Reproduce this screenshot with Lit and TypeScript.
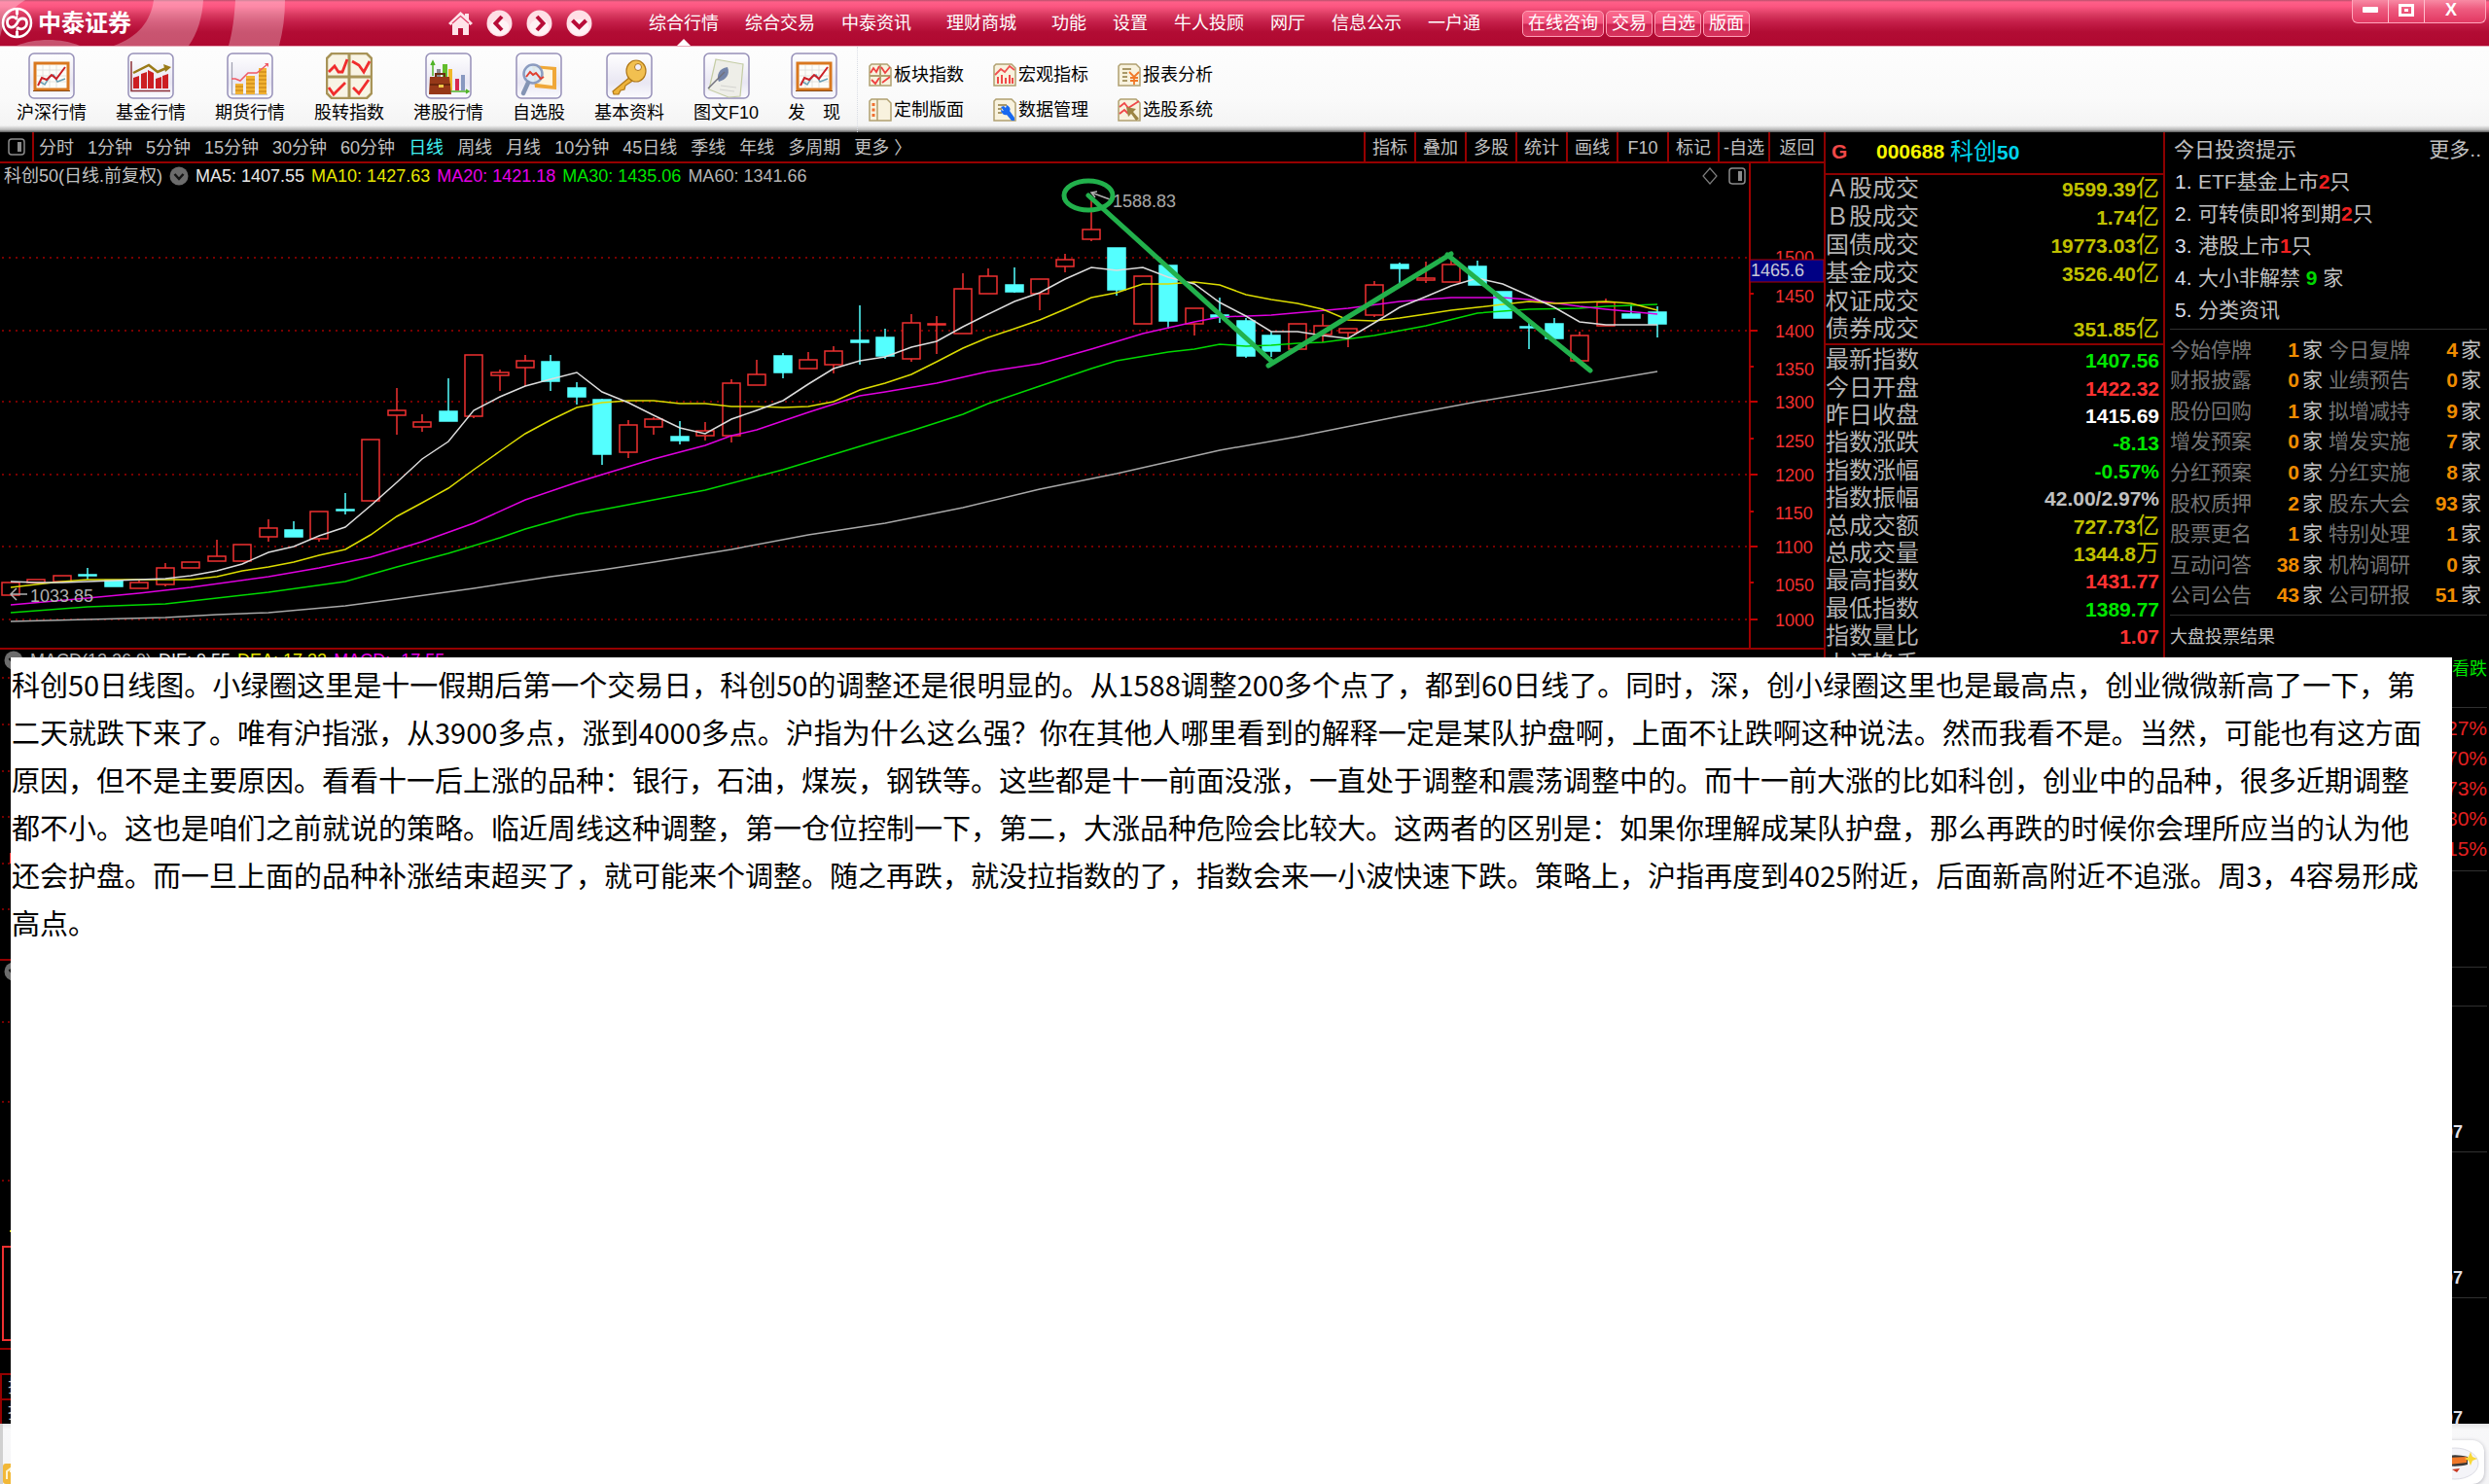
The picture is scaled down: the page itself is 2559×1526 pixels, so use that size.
import { LitElement, html, css, svg, nothing } from "lit";
import { customElement } from "lit/decorators.js";

type Pt = [number, number];
type Candle = [string, number, number, number, number];

/* ---------- navigation data ---------- */

const MENU = ["综合行情", "综合交易", "中泰资讯", "理财商城", "功能", "设置", "牛人投顾", "网厅", "信息公示", "一户通"];
const QUICK = ["在线咨询", "交易", "自选", "版面"];
const PERIODS = ["分时", "1分钟", "5分钟", "15分钟", "30分钟", "60分钟", "日线", "周线", "月线", "10分钟", "45日线", "季线", "年线", "多周期", "更多 〉"];
const CHART_TABS = ["指标", "叠加", "多股", "统计", "画线", "F10", "标记", "-自选", "返回"];

const AVERAGES = [
  ["MA5: 1407.55", "white"],
  ["MA10: 1427.63", "yellow"],
  ["MA20: 1421.18", "magenta"],
  ["MA30: 1435.06", "lime"],
  ["MA60: 1341.66", "grey"],
];

/* ---------- quote data ---------- */

const TURNOVER = [
  ["Ａ股成交", "9599.39", "亿"],
  ["Ｂ股成交", "1.74", "亿"],
  ["国债成交", "19773.03", "亿"],
  ["基金成交", "3526.40", "亿"],
  ["权证成交", "", ""],
  ["债券成交", "351.85", "亿"],
].map((r) => [...r, "gold"]);

const INDEX_ROWS = [
  ["最新指数", "1407.56", "", "up"],
  ["今日开盘", "1422.32", "", "down"],
  ["昨日收盘", "1415.69", "", "plain"],
  ["指数涨跌", "-8.13", "", "up"],
  ["指数涨幅", "-0.57%", "", "up"],
  ["指数振幅", "42.00/2.97%", "", "dim"],
  ["总成交额", "727.73", "亿", "gold"],
  ["总成交量", "1344.8", "万", "gold"],
  ["最高指数", "1431.77", "", "down"],
  ["最低指数", "1389.77", "", "up"],
  ["指数量比", "1.07", "", "down"],
  ["上证换手", "", "", "dim"],
];

const COUNTS = [
  ["今始停牌", "1", "今日复牌", "4"],
  ["财报披露", "0", "业绩预告", "0"],
  ["股份回购", "1", "拟增减持", "9"],
  ["增发预案", "0", "增发实施", "7"],
  ["分红预案", "0", "分红实施", "8"],
  ["股权质押", "2", "股东大会", "93"],
  ["股票更名", "1", "特别处理", "1"],
  ["互动问答", "38", "机构调研", "0"],
  ["公司公告", "43", "公司研报", "51"],
];

const NOTE = [
  "科创50日线图。小绿圈这里是十一假期后第一个交易日，科创50的调整还是很明显的。从1588调整200多个点了，都到60日线了。同时，深，创小绿圈这里也是最高点，创业微微新高了一下，第",
  "二天就跌下来了。唯有沪指涨，从3900多点，涨到4000多点。沪指为什么这么强？你在其他人哪里看到的解释一定是某队护盘啊，上面不让跌啊这种说法。然而我看不是。当然，可能也有这方面",
  "原因，但不是主要原因。看看十一后上涨的品种：银行，石油，煤炭，钢铁等。这些都是十一前面没涨，一直处于调整和震荡调整中的。而十一前大涨的比如科创，创业中的品种，很多近期调整",
  "都不小。这也是咱们之前就说的策略。临近周线这种调整，第一仓位控制一下，第二，大涨品种危险会比较大。这两者的区别是：如果你理解成某队护盘，那么再跌的时候你会理所应当的认为他",
  "还会护盘。而一旦上面的品种补涨结束超买了，就可能来个调整。随之再跌，就没拉指数的了，指数会来一小波快速下跌。策略上，沪指再度到4025附近，后面新高附近不追涨。周3，4容易形成",
  "高点。",
].join("");

/* ---------- chart data: kind, high, body top, body bottom, low ---------- */

const CANDLES: Candle[] = [
  ["r", 599, 599, 612, 612], ["r", 596, 596, 599, 599], ["r", 592, 592, 598, 598], ["c", 584, 591, 592, 596],
  ["c", 597, 597, 603, 603], ["r", 597, 599, 605, 605], ["r", 579, 584, 601, 603], ["r", 578, 578, 584, 584],
  ["r", 555, 572, 577, 577], ["r", 560, 560, 577, 577], ["r", 534, 543, 552, 557], ["c", 536, 545, 552, 552],
  ["r", 526, 526, 554, 557], ["c", 507, 524, 525, 529], ["r", 452, 452, 515, 515], ["r", 399, 422, 427, 447],
  ["r", 426, 434, 439, 444], ["c", 389, 423, 433, 433], ["r", 365, 365, 428, 430], ["r", 380, 383, 386, 402],
  ["r", 365, 371, 378, 397], ["c", 365, 372, 392, 402], ["c", 393, 399, 408, 416], ["c", 410, 411, 467, 478],
  ["r", 432, 437, 465, 471], ["r", 429, 431, 439, 447], ["c", 433, 449, 453, 457], ["r", 434, 443, 448, 453],
  ["r", 390, 394, 448, 455], ["r", 370, 385, 396, 396], ["c", 363, 366, 383, 389], ["r", 362, 370, 379, 379],
  ["r", 356, 361, 375, 384], ["c", 314, 350, 352, 375], ["c", 338, 347, 366, 369], ["r", 323, 332, 369, 372],
  ["r", 325, 333, 334, 364], ["r", 281, 297, 343, 343], ["r", 276, 284, 302, 302], ["c", 275, 293, 300, 301],
  ["r", 287, 287, 302, 319], ["r", 261, 267, 274, 280], ["r", 205, 236, 246, 248], ["c", 255, 255, 298, 304],
  ["r", 284, 284, 333, 333], ["c", 273, 273, 330, 338], ["r", 317, 317, 333, 345], ["c", 306, 324, 326, 332],
  ["c", 327, 330, 366, 368], ["c", 341, 345, 361, 367], ["r", 333, 333, 359, 359], ["r", 323, 335, 344, 352],
  ["r", 338, 338, 342, 357], ["r", 289, 293, 324, 326], ["c", 270, 272, 276, 292], ["r", 269, 286, 288, 291],
  ["r", 267, 272, 290, 290], ["c", 268, 274, 293, 293], ["c", 300, 300, 327, 327], ["c", 331, 336, 337, 359],
  ["c", 327, 333, 348, 348], ["r", 341, 345, 371, 371], ["r", 307, 311, 335, 335], ["c", 313, 323, 327, 327],
  ["c", 315, 321, 333, 347],
];

const MA5 = [598, 599, 599, 598, 597, 596, 595, 592, 587, 580, 568, 562, 551, 542, 520, 496, 472, 454, 422, 408, 397, 390, 383,
  403, 414, 427, 440, 446, 431, 422, 412, 395, 379, 371, 367, 357, 351, 336, 323, 310, 301, 287, 275, 278, 275, 285, 292, 311,
  325, 341, 341, 345, 348, 332, 316, 305, 294, 286, 292, 304, 316, 331, 334, 334, 334];
const MA10 = [604, 601, 598, 596, 596, 596, 596, 596, 593, 587, 583, 578, 571, 565, 550, 531, 517, 502, 483, 464, 446, 432, 419,
  414, 412, 412, 415, 415, 418, 418, 419, 418, 413, 401, 394, 385, 372, 358, 347, 338, 329, 318, 306, 301, 292, 292, 290, 293,
  303, 308, 312, 318, 329, 330, 327, 323, 319, 316, 313, 310, 312, 311, 310, 312, 319];
const MA20: Pt[] = [[0, 622], [3, 615], [5, 610], [7, 604], [10, 593], [12, 584], [14, 573], [16, 557], [18, 538], [20, 514],
  [22, 496], [23, 488], [25, 472], [27, 458], [28, 448], [29, 442], [31, 424], [33, 407], [34, 403], [36, 394], [38, 382],
  [40, 374], [42, 359], [44, 343], [46, 331], [47, 326], [49, 324], [52, 317], [54, 310], [56, 306], [58, 306], [59, 308],
  [61, 315], [62, 318], [64, 323]];
const MA30: Pt[] = [[0, 630], [3, 624], [6, 621], [8, 615], [10, 609], [13, 598], [15, 583], [17, 569], [19, 553], [20, 544],
  [22, 529], [24, 519], [25, 514], [27, 504], [30, 483], [33, 459], [35, 443], [37, 426], [38, 415], [40, 397], [42, 379],
  [43, 371], [45, 362], [46, 359], [47, 354], [48, 356], [49, 355], [50, 353], [51, 352], [53, 345], [55, 335], [57, 322],
  [59, 318], [61, 317], [62, 315], [64, 313]];
const MA60: Pt[] = [[0, 639], [3, 637], [6, 635], [8, 632], [10, 630], [13, 623], [15, 616], [18, 605], [21, 593], [23, 586],
  [25, 578], [28, 565], [31, 550], [34, 538], [37, 522], [40, 503], [43, 487], [45, 475], [47, 463], [50, 449], [54, 428],
  [57, 413], [60, 400], [64, 382]];

const cx = (i: number) => Math.round(11 + i * 26.45);
const line = (pts: Pt[]) => pts.map(([i, y]) => `${cx(i)},${y}`).join(" ");
const dense = (ys: number[]) => line(ys.map((y, i) => [i, y] as Pt));

const GRID = [265, 340, 413, 488, 562, 637];
const SCALE: [string, number, number][] = [
  ["1500", 264, 0], ["1450", 304, 302], ["1400", 340, 340], ["1350", 379, 377], ["1300", 413, 413], ["1250", 453, 451],
  ["1200", 488, 488], ["1150", 527, 526], ["1100", 562, 562], ["1050", 601, 599], ["1000", 637, 637],
];

/* ---------- icons ---------- */

const frame = svg`<rect x="1" y="1" width="46" height="46" rx="5" fill="url(#tile)" stroke="#9690b8" stroke-width="1.5"/>`;
const defs = svg`<defs><linearGradient id="tile" x1="0" y1="0" x2="0" y2="1"><stop offset="0" stop-color="#fff"/><stop offset=".65" stop-color="#e9e7f3"/><stop offset="1" stop-color="#fbfbfe"/></linearGradient></defs>`;

const iconLine = svg`${frame}
  <rect x="7" y="11" width="34" height="27" fill="#fdfdf8" stroke="#d9781f" stroke-width="3"/>
  <path d="M5 39.500H43" stroke="#8a4a14"/>
  <path d="M9 18H39M9 24H39M9 30H39M15 13V36M22 13V36M29 13V36" stroke="#dcdcd8" stroke-width=".8"/>
  <path d="M12 30L17 33L22 25L26 23L30 30L38 27" fill="none" stroke="#6aa0b4" stroke-width="1.500"/>
  <path d="M10 34L14 26L19 28L24 23L29 27L38 15" fill="none" stroke="#cc2026" stroke-width="2"/>`;
const iconBars = svg`${frame}
  <path d="M4 9V39.500H44" fill="none" stroke="#8c3038" stroke-width="1.500"/>
  <path d="M6 26l6-2V37H6zM14 22l6-2V37H14zM21 18l6 3V37H21zM29 27l6-2V37H29zM36 24l6-2V37H36z" fill="#cc1e22"/>
  <path d="M6 21L22 13L31 20L40 16" fill="none" stroke="#9a7a18" stroke-width="2.500"/><path d="M37 12L45 15L39 20z" fill="#9a7a18"/>`;
const iconCoins = svg`${frame}
  <path d="M5.500 10V43H42" fill="none" stroke="#a0a0b0" stroke-width="1.200"/>
  <path d="M9 32H17V43H9zM20 24H29V43H20zM33 16H41V43H33z" fill="#f2b233"/>
  <path d="M9 35H17M9 39H17M20 28H29M20 32H29M20 36H29M20 40H29M33 20H41M33 24H41M33 28H41M33 32H41M33 36H41M33 40H41" stroke="#c07c10"/>
  <path d="M5 27H9L14 29L22 21L31 21L36 17L42 12" fill="none" stroke="#ef5a66" stroke-width="1.500"/><path d="M39 11h4v4z" fill="#ef5a66"/>`;
const fourCells = svg`<path d="M6 1H42L47 6V42L42 47H6L1 42V6z" fill="#f8f4e4" stroke="#a89458" stroke-width="2.500"/>
  <path d="M24 1V47M1 25H47" stroke="#a89458" stroke-width="3"/>
  <path d="M3 20L9 14L13 20L17 20L22 7M27 9L34 13L39 20L45 9M3 36L8 43L15 36L20 31M28 36L34 42L44 28" fill="none" stroke="#f02c2c" stroke-width="2.800"/>`;
const iconCase = svg`${frame}
  <path d="M8 24V12M6 13L8 9L10 13M24 40H43M42 38L45 40L42 42" stroke="#50b428" stroke-width="1.500" fill="#50b428"/>
  <rect x="12" y="17" width="4" height="9" fill="#8a8a90"/><rect x="18" y="12" width="5" height="14" fill="#62bc2c"/><rect x="24" y="17" width="4" height="22" fill="#f0b828"/>
  <rect x="31" y="27" width="4" height="12" fill="#d82850"/><rect x="37" y="23" width="4" height="16" fill="#8898c0"/>
  <path d="M11 26V22H20V26" fill="none" stroke="#6c2c10" stroke-width="2"/>
  <path d="M5 25H25L27 43H4z" fill="#963818"/><path d="M5 33H26" stroke="#5c2008" stroke-width="1.500"/><rect x="14" y="33" width="5" height="3" fill="#f0c848"/>`;
const iconSearch = svg`${frame}
  <path d="M17 13L42 15V38L20 36z" fill="#f0a838"/><path d="M20 16L38 18V34L22 32z" fill="#fff6e0"/>
  <circle cx="18" cy="22" r="9.500" fill="#dcecfa" fill-opacity=".9" stroke="#8c9cc0" stroke-width="2.500"/>
  <path d="M11 25L15 20L18 23L21 21L26 27L29 25" fill="none" stroke="#e04030" stroke-width="2"/>
  <path d="M13 31L8 42" stroke="#8494b4" stroke-width="4.500" stroke-linecap="round"/>`;
const iconKey = svg`${frame}
  <path d="M25 25L7 40L8 43H13L15 39L19 38L20 34L29 28z" fill="#eeb43c" stroke="#b07818" stroke-width="1.200"/>
  <ellipse cx="31" cy="19" rx="10" ry="11" fill="#f2c050" stroke="#b07818" stroke-width="1.200"/><circle cx="33" cy="15" r="3.500" fill="#f4f0fa" stroke="#b07818"/>`;
const iconQuill = svg`${frame}
  <path d="M13 7L41 12L38 45L26 46L6 38z" fill="#eeeee8" stroke="#c4ccA4" stroke-width="1.200"/>
  <path d="M18 34L34 36M17 38L32 40" stroke="#d4d4d0"/>
  <path d="M25 15C16 16 13 24 16 30C23 28 28 23 25 15z" fill="#7484a8"/><path d="M22 20L5 37" stroke="#70707c" stroke-width="1.500"/>`;

const TOOLS = [
  ["沪深行情", iconLine], ["基金行情", iconBars], ["期货行情", iconCoins], ["股转指数", fourCells], ["港股行情", iconCase],
  ["自选股", iconSearch], ["基本资料", iconKey], ["图文F10", iconQuill], ["发　现", iconLine],
] as const;

const sheet = svg`<path d="M3 1H19L23 5V23H1V3z" fill="#f8f2de" stroke="#b0a070" stroke-width="1.500"/>`;
const SMALL_TOOLS = [
  ["板块指数", svg`${sheet}<path d="M12 1V23M1 13H23" stroke="#b0a070" stroke-width="2"/><path d="M2 10L5 5L8 9L11 3M13 4L17 10L22 4M3 17L7 21L11 15M14 20L22 14" fill="none" stroke="#f04040" stroke-width="1.800"/>`],
  ["宏观指标", svg`${sheet}<path d="M2 12L8 6L12 9L17 3L22 7" fill="none" stroke="#f05050" stroke-width="1.800"/><path d="M5 21V14M9 21V12M13 21V15M17 21V12M20 21V15" stroke="#f04848" stroke-width="2"/>`],
  ["报表分析", svg`${sheet}<path d="M5 6H14M5 10H10M5 14H10M5 18H10" stroke="#a89868" stroke-width="1.800"/><path d="M12 9L17 14L22 9M17 14V22M13 15H21M13 18H21" fill="none" stroke="#f07828" stroke-width="1.800"/>`],
  ["定制版面", svg`${sheet}<path d="M9 1V23" stroke="#b0a070" stroke-width="1.500"/><path d="M5 5V8M5 10.500V13.500M5 16V19" stroke="#f07030" stroke-width="3"/>`],
  ["数据管理", svg`${sheet}<path d="M5 7H14M5 11H9M5 15H9" stroke="#a89868" stroke-width="1.800"/><path d="M8 9L11 8L13 10L14 7C18 9 18 12 17 13L22 20V23H19L14 17C11 18 8 15 8 12L11 13z" fill="#1868f0"/>`],
  ["选股系统", svg`${sheet}<path d="M2 9L7 5L11 10L22 3M2 16L7 12L11 16" fill="none" stroke="#f04848" stroke-width="1.800"/><path d="M9 9L19 11L16 14L22 21L19 23L14 16L11 19z" fill="#9c8444"/>`],
] as const;

@customElement("app-root")
export class AppRoot extends LitElement {
  static styles = css`
    :host { display: block; font-family: "Liberation Sans", "Noto Sans CJK SC", sans-serif; font-size: 18px; line-height: 24px; color: #c0c0c0; }
    * { box-sizing: border-box; }
    button { font: inherit; color: inherit; background: none; border: 0; padding: 0; margin: 0; white-space: nowrap; }
    a { color: inherit; text-decoration: none; white-space: nowrap; }
    table { border-collapse: collapse; width: 100%; }
    td, th { padding: 0; font-weight: 400; text-align: left; white-space: nowrap; }
    h2, p, ol { margin: 0; padding: 0; font-weight: 400; }
    svg { display: block; flex: none; }
    .app { position: relative; min-height: 100vh; background: #000; display: grid; grid-template-rows: 48px 88px 1fr 63px; overflow: hidden; }

    .top { position: relative; display: flex; color: #fff; border-bottom: 1px solid #e7a9b7;
      background: linear-gradient(#b8506c 0, #ff5f88 2px, #fb5580 7px, #d83a60 15px, #c41e48 23px, #b20c34 33px, #b00830 100%); }
    .brand { flex: none; width: 461px; height: 47px; display: flex; }
    .brand svg { width: 300px; height: 47px; }
    .brand .word { font-size: 24px; font-weight: 700; }
    .shell-nav { display: flex; align-items: center; gap: 14px; width: 206px; }
    .menu { display: flex; align-items: center; gap: 27px; height: 47px; }
    .menu a { position: relative; line-height: 45px; padding-top: 2px; }
    .menu a.wide { margin: 0 9px; }
    .menu a.current::after { content: ""; position: absolute; left: 50%; bottom: 0; margin-left: -7px; border: 7px solid transparent; border-top: 0; border-bottom-color: #fff; }
    .quick { display: flex; gap: 2px; align-items: center; margin-left: 43px; padding-top: 2px; }
    .quick button { height: 27px; line-height: 25px; padding: 0 5px; border: 1px solid #ff9fb6; border-radius: 5px; background: linear-gradient(#fb6a8e 0, #f0507a 48%, #cc2450 52%, #d8345e 100%); }
    .window { margin-left: auto; margin-right: 3px; display: flex; height: 24px; border: 1px solid #ffa6bb; border-top: 0; border-radius: 0 0 6px 6px; background: linear-gradient(#f88aa4, #ee5c80 40%, #e23862); }
    .window button { width: 37px; border-right: 1px solid #ffc0ce; display: grid; place-items: center; padding-bottom: 3px; }
    .window button:last-child { width: 62px; border: 0; padding-right: 8px; font-weight: 700; line-height: 18px; }

    .tools { display: flex; color: #000; background: linear-gradient(#fdfdfd, #fafafa 60%, #f4f4f4 92%, #b8b8b8 97%, #555); }
    .big { display: flex; gap: 30px; padding: 6px 0 0 17px; width: 882px; border-right: 1px dotted #d8dce4; align-items: flex-start; }
    .big button { display: flex; flex-direction: column; align-items: center; gap: 2px; }
    .small { display: grid; grid-template-columns: auto auto auto; gap: 12px 30px; align-content: start; padding: 17px 0 0 11px; }
    .small button { display: flex; gap: 2px; align-items: center; height: 24px; }

    .work { display: grid; grid-template-columns: 1fr 351px 333px; min-height: 0; }
    .chart { display: flex; flex-direction: column; min-width: 0; }
    .bar { display: flex; height: 32px; border-bottom: 2px solid #960000; }
    .bar .dock { width: 35px; border-right: 2px solid #960000; display: grid; place-items: center; }
    .periods { display: flex; padding: 2px 0 0 5px; gap: 14px; flex: 1; align-items: center; }
    .periods .on { color: #40f0f0; }
    .tabs { display: grid; grid-template-columns: repeat(8, 52px) 57px; }
    .tabs button { border-left: 2px solid #960000; text-align: center; padding-top: 2px; }
    .plot { display: grid; grid-template-columns: 1fr 76px; }
    .legend { display: flex; gap: 7px; align-items: center; height: 26px; padding: 0 4px; white-space: nowrap; }
    .legend .tail { margin-left: auto; display: flex; gap: 10px; }
    .plot svg.full { width: 100%; height: auto; overflow: visible; }
    .plot svg text { font-size: 18px; }
    .white { color: #e8e8e8; } .yellow { color: #e6e600; } .magenta { color: #e600e6; } .lime { color: #00e600; } .grey { color: #b4b4b4; }
    .pane { border-top: 2px solid #960000; }
    .pane .legend { height: 22px; }
    .macd { height: 320px; } .third { height: 400px; }
    .rows { height: 78px; padding-top: 24px; border-top: 2px solid #960000; }
    .rows div { border: 2px solid #960000; border-bottom: 0; height: 26px; padding-left: 6px; }

    .quote { border-left: 2px solid #8c0000; border-right: 2px solid #8c0000; }
    .ident { height: 44px; display: flex; align-items: center; font-size: 21px; font-weight: 700; padding: 0 0 2px 6px; border-bottom: 2px solid #8c0000; }
    .ident .flag { width: 46px; color: #f04848; }
    .ident .code { color: #f6f600; margin-right: 6px; }
    .ident .name { color: #00d4ec; }
    .ident .name span { font-size: 24px; font-weight: 400; }
    .quote table { font-size: 24px; line-height: 24px; }
    .quote .sums { height: 175px; border-bottom: 2px solid #8c0000; }
    .quote .marks { height: 341px; margin-top: 1px; }
    .quote th { color: #b4b4b4; }
    .quote td { text-align: right; padding-right: 4px; }
    .quote b { font-size: 21px; line-height: 20px; }
    .gold { color: #c0c000; } .up { color: #00e600; } .down { color: #ff3232; } .plain { color: #fff; } .dim { color: #c0c0c0; }

    .info { font-size: 21px; line-height: 33px; padding: 1px 2px 0 5px; }
    .info header { display: flex; justify-content: space-between; padding: 0 6px 0 4px; }
    .info h2 { font-size: 21px; }
    .info ol { list-style: none; padding: 0 0 3px 5px; border-bottom: 1px solid #303030; }
    .info li { display: flex; white-space: pre; }
    .info li .no { width: 24px; color: #d8dce8; }
    .info .hot { color: #f02020; } .info .calm { color: #00d800; }
    .info table { height: 284px; margin: 5px 0 4px; line-height: 30px; }
    .info th { color: #747474; width: 84px; }
    .info td { text-align: right; color: #c0c0c0; }
    .info td b { color: #f08c00; margin-right: 3px; }
    .info td:nth-child(2) { width: 73px; } .info td:nth-child(4) { padding-right: 6px; }
    .info th:nth-child(3) { padding-left: 6px; width: 90px; }
    .vote { border-top: 1px solid #303030; border-bottom: 1px solid #303030; height: 96px; padding-top: 6px; }
    .vote h2 { font-size: 18px; }
    .vote p { font-size: 18px; text-align: right; color: #00e600; }
    .share { height: 168px; padding-top: 5px; display: grid; align-content: start; border-bottom: 1px solid #303030; text-align: right; color: #e62020; }
    .share span { line-height: 31px; }
    .slot { border-bottom: 1px solid #303030; height: 150px; display: flex; justify-content: flex-end; align-items: flex-end; padding-right: 25px; font-size: 18px; color: #e0e0e8; }
    .slot.tall { height: 99px; } .slot.short { height: 40px; } .slot.last { height: 129px; overflow: hidden; border: 0; }
    .slot b { line-height: 40px; }
    .slot.last b { line-height: 12px; }

    .dock-bar { background: linear-gradient(#e4e4e6, #f8f8f9 6px, #f4f4f6); border-left: 3px solid #d0d0d0; display: flex; justify-content: space-between; align-items: flex-end; }
    .folder { display: block; }
    .robot { width: 60px; height: 45px; margin: 0 5px 1px 0; border-radius: 12px; background: #fff; box-shadow: 0 1px 4px #b0b0b8; }

    .note { position: absolute; left: 11px; right: 38px; top: 676px; bottom: 0; background: #fff; color: #000; padding: 3px 26px 0 1px;
      font-family: "Noto Sans CJK SC", sans-serif; font-size: 29px; line-height: 49px; }
  `;

  private brand() {
    return html`<svg viewBox="0 0 300 47" role="img" aria-label="中泰证券">
      <g fill="#fff" fill-opacity=".3">
        <path d="M158 0H209C208 18 203 34 194 47H117C142 38 155 22 158 0z"/>
        <path d="M242 0H293C293 16 291 32 287 47H235C239 33 241 17 242 0z"/>
        <path d="M0 0H26C12 8 4 20 0 38z"/>
        <path d="M17 47C36 39 63 39 82 47z"/>
      </g>
      <g fill="none" stroke="#fff">
        <circle cx="17.500" cy="23.500" r="14.500" stroke-width="2.500"/>
        <path d="M17.500 9V15M17.500 32V38" stroke-width="3"/>
        <path d="M17.500 20C14 15 7 18 7.500 23.500C8 29 14 30 17.500 24C20 17 27 18 27.500 23C28 29 21 32 17.500 28" stroke-width="2.800"/>
        <path d="M17.500 15V20M17.500 28V32" stroke-width="1.500"/>
      </g>
      <text class="word" x="39" y="32" fill="#fff">中泰证券</text>
    </svg>`;
  }

  private round(d: string, label: string) {
    return html`<button aria-label=${label}><svg width="27" height="28" viewBox="0 0 27 28">
      <ellipse cx="13.500" cy="14" rx="13" ry="13.500" fill="#ffdfe6"/><ellipse cx="13.500" cy="18" rx="10" ry="8" fill="#fff" fill-opacity=".6"/>
      <path d=${d} fill="none" stroke="#b80c38" stroke-width="4"/></svg></button>`;
  }

  private chevron() {
    return html`<svg width="20" height="20" viewBox="0 0 20 20"><circle cx="10" cy="10" r="9.500" fill="#6c6c6c"/><path d="M5.500 8L10 13L14.500 8" fill="none" stroke="#141414" stroke-width="2.500"/></svg>`;
  }

  private panelIcon() {
    return html`<svg width="18" height="18" viewBox="0 0 18 18"><rect x="1" y="1" width="16" height="16" rx="3" fill="none" stroke="#8c8c8c" stroke-width="1.500"/><rect x="10" y="4" width="4" height="10" fill="#8c8c8c"/></svg>`;
  }

  private quoteRows(rows: string[][]) {
    return rows.map(([label, value, unit, tone]) => html`<tr><th scope="row">${label}</th><td class=${tone}><b>${value}</b>${unit}</td></tr>`);
  }

  private candle([kind, hi, top, bottom, lo]: Candle, i: number) {
    const x = cx(i);
    const color = kind === "r" ? "#f03030" : "#54ffff";
    const h = Math.max(bottom - top, 1);
    return svg`<path d="M${x} ${hi}V${top}M${x} ${bottom}V${lo}" stroke=${color} stroke-width="1.500"/>
      <rect x=${x - 9} y=${top} width="18" height=${h} fill=${kind === "r" ? "#000" : color} stroke=${color} stroke-width="1.500"/>`;
  }

  private plot() {
    return html`<svg class="full" viewBox="0 194 1799 472" role="img" aria-label="科创50 日线">
      ${GRID.map((y) => svg`<path d="M2 ${y}H1799" stroke="#a00000" stroke-width="1.500" stroke-dasharray="2 5"/>`)}
      ${CANDLES.map((c, i) => this.candle(c, i))}
      <g fill="none" stroke-width="1.500">
        <polyline points=${line(MA60)} stroke="#a8a8a8"/>
        <polyline points=${line(MA30)} stroke="#00d800"/>
        <polyline points=${line(MA20)} stroke="#e000e0"/>
        <polyline points=${dense(MA10)} stroke="#dcdc00"/>
        <polyline points=${dense(MA5)} stroke="#dcdcdc"/>
        <path d="M28 611H11M17 605L11 611L17 617M1141 205L1122 198M1128 197L1122 198L1126 203" stroke="#b0b0b0"/>
      </g>
      <text x="31" y="619" fill="#b0b0b0">1033.85</text>
      <text x="1144" y="213" fill="#a8a8a8">1588.83</text>
      <g fill="none" stroke="#22b14c" stroke-width="5" stroke-linecap="round">
        <ellipse cx="1119" cy="201" rx="25" ry="15"/>
        <path d="M1119 201L1309 373M1304 376L1492 261M1488 262L1635 381"/>
      </g>
    </svg>`;
  }

  private scale() {
    return html`<svg class="full" viewBox="1799 168 76 498" role="img" aria-label="指数坐标">
      <path d="M1799 168V666" stroke="#a00000" stroke-width="2"/>
      ${SCALE.map(([t, y, tick], i) => svg`${tick ? svg`<path d="M1799 ${tick}h${i % 2 ? 4 : 8}" stroke="#c00000" stroke-width="2"/>` : nothing}
        <text x="1825" y=${y + 7} fill="#f03030">${t}</text>`)}
      <rect x="1799" y="267" width="76" height="23" fill="#000084" stroke="#b00000"/>
      <text x="1800" y="284" fill="#c8c8d8">1465.6</text>
    </svg>`;
  }

  render() {
    return html`<div class="app">
      <header class="top">
        <div class="brand">${this.brand()}</div>
        <div class="shell-nav">
          <button aria-label="首页"><svg width="25" height="26" viewBox="0 0 25 26"><path d="M12.500 1L0 13L2.500 15L4 13.500V25H10V18H15V25H21V13.500L22.500 15L25 13L21 9V3H17V5z" fill="#ffe4ea"/><path d="M4 13L12.500 5.500L21 13" fill="none" stroke="#e0406a" stroke-width="1.200"/></svg></button>
          ${this.round("M16 7L9.500 14L16 21", "后退")}${this.round("M11 7L17.500 14L11 21", "前进")}${this.round("M6.500 11L13.500 18L20.500 11", "展开")}
        </div>
        <nav class="menu">${MENU.map((m, i) => html`<a href="#" class="${i === 0 ? "current" : ""} ${i === 3 ? "wide" : ""}">${m}</a>`)}</nav>
        <div class="quick">${QUICK.map((q) => html`<button>${q}</button>`)}</div>
        <div class="window">
          <button aria-label="最小化"><svg width="16" height="6" viewBox="0 0 16 6"><rect width="16" height="6" rx="1" fill="#fff"/></svg></button>
          <button aria-label="最大化"><svg width="16" height="13" viewBox="0 0 16 13"><rect x="1.500" y="1.500" width="13" height="10" fill="none" stroke="#fff" stroke-width="3"/><rect x="6" y="5" width="4" height="3" fill="#fff"/></svg></button>
          <button aria-label="关闭">X</button>
        </div>
      </header>

      <div class="tools">
        <div class="big">${TOOLS.map(([t, icon]) => html`<button><svg width="48" height="48" viewBox="0 0 48 48">${defs}${icon}</svg><span>${t}</span></button>`)}</div>
        <div class="small">${SMALL_TOOLS.map(([t, icon]) => html`<button><svg width="24" height="24" viewBox="0 0 24 24">${icon}</svg><span>${t}</span></button>`)}</div>
      </div>

      <main class="work">
        <section class="chart">
          <div class="bar">
            <button class="dock" aria-label="侧栏">${this.panelIcon()}</button>
            <div class="periods">${PERIODS.map((p) => html`<button class=${p === "日线" ? "on" : ""}>${p}</button>`)}</div>
            <div class="tabs">${CHART_TABS.map((t) => html`<button>${t}</button>`)}</div>
          </div>
          <div class="plot">
            <div>
              <div class="legend">
                <span>科创50(日线.前复权)</span>${this.chevron()}
                ${AVERAGES.map(([t, c]) => html`<span class=${c}>${t}</span>`)}
                <span class="tail"><svg width="18" height="18" viewBox="0 0 18 18"><path d="M9 1L16 9L9 17L2 9z" fill="none" stroke="#7c7c7c" stroke-width="1.200"/></svg>${this.panelIcon()}</span>
              </div>
              ${this.plot()}
            </div>
            ${this.scale()}
          </div>
          <div class="pane macd">
            <div class="legend">${this.chevron()}<span class="grey">MACD(12,26,9)</span><span class="white">DIF: 9.55</span><span class="yellow">DEA: 17.32</span><span class="magenta">MACD: -17.55</span></div>
            <svg width="12" height="260" viewBox="0 690 12 260"><path d="M2 697H12M2 745H12M2 793H12M2 840H12M2 888H12M2 935H12" stroke="#a00000" stroke-width="1.500" stroke-dasharray="2 4"/><path d="M11 877V888" stroke="#f03030" stroke-width="2"/></svg>
          </div>
          <div class="pane third">
            <div class="legend">${this.chevron()}</div>
            <svg width="12" height="370" viewBox="0 1010 12 370"><path d="M2 1051H12M2 1133H12M2 1214H12" stroke="#a00000" stroke-width="1.500" stroke-dasharray="2 4"/><path d="M10 1266h2" stroke="#c8c800" stroke-width="2"/><path d="M12 1282H3V1378H12" fill="none" stroke="#f03030" stroke-width="2"/></svg>
          </div>
          <div class="rows"><div>扩展</div><div>指标</div></div>
        </section>

        <section class="quote">
          <div class="ident"><span class="flag">G</span><span class="code">000688</span><span class="name"><span>科创</span>50</span></div>
          <table class="sums">${this.quoteRows(TURNOVER)}</table>
          <table class="marks">${this.quoteRows(INDEX_ROWS)}</table>
        </section>

        <aside class="info">
          <header><h2>今日投资提示</h2><a href="#">更多..</a></header>
          <ol>
            <li><span class="no">1.</span>ETF基金上市<b class="hot">2</b>只</li>
            <li><span class="no">2.</span>可转债即将到期<b class="hot">2</b>只</li>
            <li><span class="no">3.</span>港股上市<b class="hot">1</b>只</li>
            <li><span class="no">4.</span>大小非解禁 <b class="calm">9</b> 家</li>
            <li><span class="no">5.</span>分类资讯</li>
          </ol>
          <table>${COUNTS.map(([a, n, b, m]) => html`<tr><th>${a}</th><td><b>${n}</b>家</td><th>${b}</th><td><b>${m}</b>家</td></tr>`)}</table>
          <div class="vote"><h2>大盘投票结果</h2><p>看跌</p></div>
          <div class="share"><span>27%</span><span>70%</span><span>73%</span><span>80%</span><span>15%</span></div>
          <div class="slot tall"></div><div class="slot short"></div>
          <div class="slot"><b>07</b></div><div class="slot"><b>07</b></div><div class="slot last"><b>07</b></div>
        </aside>
      </main>

      <footer class="dock-bar">
        <svg class="folder" width="30" height="22" viewBox="0 0 30 22"><rect width="30" height="21" rx="3" fill="#f2b838"/><path d="M4 16V8L8 5V8H12" fill="none" stroke="#fff4d0" stroke-width="2"/></svg>
        <button class="robot" aria-label="助手"><svg width="60" height="45" viewBox="0 0 60 45"><ellipse cx="30" cy="24" rx="24" ry="16" fill="#f4f4f8" stroke="#dcdce4"/><path d="M18 18C26 14 34 15 43 17V25C36 27 28 27 20 26z" fill="#383838"/><path d="M22 18L42 17V23L24 25z" fill="#f07828"/><path d="M27 30l8-1-3 4z" fill="#c83820"/><path d="M46 12l2 5 5 2-5 2-2 5-2-5-4-2 4-2z" fill="#f8d838"/></svg></button>
      </footer>

      <article class="note"><p>${NOTE}</p></article>
    </div>`;
  }
}
